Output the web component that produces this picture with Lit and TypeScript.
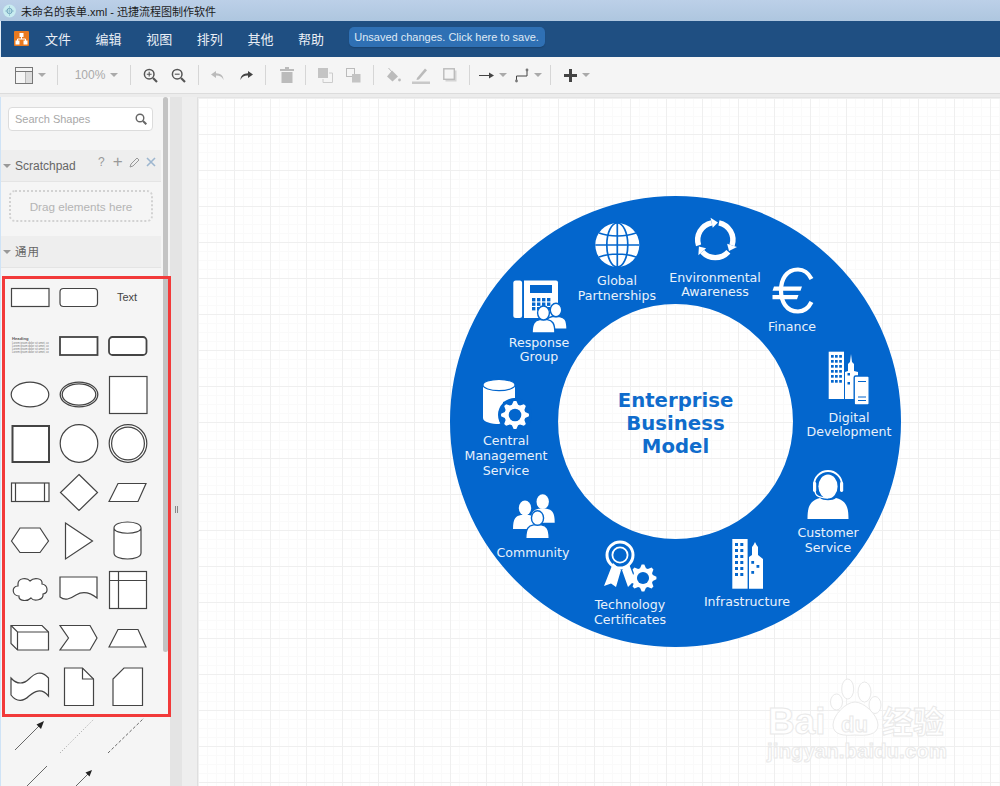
import { LitElement, html, css, svg } from "lit";
import { customElement } from "lit/decorators.js";

const W = "#fff";
const B = "#0366cd";

function gear(cx: number, cy: number, r: number, teeth = 8) {
  let d = "";
  const n = teeth * 4;
  for (let i = 0; i < n; i++) {
    const a = ((i - 0.5) / n) * Math.PI * 2;
    const rr = i % 4 === 0 || i % 4 === 1 ? r : r * 0.76;
    d += `${i ? "L" : "M"}${(cx + rr * Math.cos(a)).toFixed(2)} ${(cy + rr * Math.sin(a)).toFixed(2)}`;
  }
  return svg`<path d="${d}Z" fill="${W}"/><circle cx="${cx}" cy="${cy}" r="${r * 0.45}" fill="${B}"/>`;
}

function person(cx: number, cy: number, s: number, outline = false) {
  const body = `M${cx - 12 * s} ${cy + 21 * s}C${cx - 12 * s} ${cy + 10 * s} ${cx - 9 * s} ${cy + 8 * s} ${cx - 4 * s} ${cy + 7 * s}H${cx + 4 * s}C${cx + 9 * s} ${cy + 8 * s} ${cx + 12 * s} ${cy + 10 * s} ${cx + 12 * s} ${cy + 21 * s}Z`;
  const st = outline ? B : "none";
  return svg`<path d="${body}" fill="${W}" stroke="${st}" stroke-width="1.4"/><ellipse cx="${cx}" cy="${cy}" rx="${6.2 * s}" ry="${7.4 * s}" fill="${W}" stroke="${st}" stroke-width="1.4"/>`;
}

function windows(xs: number[], ys: number[], size = 3) {
  return xs.flatMap((x) => ys.map((y) => svg`<rect x="${x}" y="${y}" width="${size}" height="${size}" fill="${B}"/>`));
}

function recycle(cx: number, cy: number, r: number) {
  const out = [];
  for (const start of [-78, 42, 162]) {
    const a0 = (start * Math.PI) / 180;
    const a1 = ((start + 96) * Math.PI) / 180;
    const p = (a: number, q: number) => `${(cx + q * Math.cos(a)).toFixed(2)} ${(cy + q * Math.sin(a)).toFixed(2)}`;
    const tip = a1 + 0.36;
    out.push(svg`<path d="M${p(a0, r)}A${r} ${r} 0 0 1 ${p(a1, r)}" fill="none" stroke="${W}" stroke-width="5.4"/>
      <path d="M${p(a1, r + 5.2)}L${p(tip, r)}L${p(a1, r - 5.2)}Z" fill="${W}"/>`);
  }
  return out;
}

const labels: [string, number, number][] = [
  ["Global", 617, 285], ["Partnerships", 617, 299.5],
  ["Environmental", 715, 281.5], ["Awareness", 715, 296],
  ["Finance", 792, 331],
  ["Digital", 849, 421.5], ["Development", 849, 436],
  ["Customer", 828, 537], ["Service", 828, 551.5],
  ["Infrastructure", 747, 606],
  ["Technology", 630, 609], ["Certificates", 630, 623.5],
  ["Community", 533, 556.5],
  ["Central", 506, 445], ["Management", 506, 460], ["Service", 506, 474.5],
  ["Response", 539, 346.5], ["Group", 539, 361],
];

const S = "#444";

@customElement("app-root")
export class AppRoot extends LitElement {
  static styles = css`
    :host { display: block; position: relative; width: 1000px; height: 786px; overflow: hidden; font-family: "Liberation Sans", "Noto Sans CJK SC", sans-serif; }
    .app { display: flex; flex-direction: column; height: 786px; background: #ececec; }
    .title { height: 21px; flex: none; display: flex; align-items: center; gap: 5px; padding-left: 3px; box-sizing: border-box; background: linear-gradient(#bcd0e8, #aec6df); font-size: 11px; color: #1b1b1b; font-family: "Liberation Sans", "Noto Sans CJK SC", sans-serif; }
    .menubar { height: 36px; flex: none; display: flex; align-items: center; background: #1f4f82; color: #e9eef5; box-sizing: border-box; padding-left: 13px; border-left: 1px solid #e4eef8; }
    .logo { display: block; margin-right: 16px; margin-top: -2px; }
    .mi { width: 50.6px; font-size: 13px; margin-top: -2px; font-family: "Noto Sans CJK SC", sans-serif; }
    .save { margin-left: 0; margin-top: -5px; height: 20px; width: 196px; box-sizing: border-box; display: flex; align-items: center; justify-content: center; background: #2f70b4; border-radius: 5px; color: #dfe9f4; font-size: 11px; box-shadow: 0 1px 1px #1a436f; }
    .toolbar { height: 37px; flex: none; display: flex; align-items: center; background: #f5f5f5; border-bottom: 1px solid #dcdcdc; box-sizing: border-box; }
    .g { height: 20px; display: flex; align-items: center; justify-content: center; box-sizing: border-box; border-right: 1px solid #d6d6d6; flex: none; }
    .g1 { width: 58px; justify-content: flex-start; padding-left: 15px; } .g2 { width: 73px; padding-left: 5px; } .g3 { width: 68px; } .g4 { width: 67px; }
    .g5 { width: 40px; padding-left: 3px; } .g6 { width: 68px; } .g7 { width: 96px; } .g8 { width: 81px; }
    .g9 { width: 70px; border-right: none; justify-content: flex-start; padding-left: 13px; }
    .it { width: 28.4px; height: 20px; display: flex; align-items: center; justify-content: center; }
    .caret { width: 0; height: 0; border-left: 4px solid transparent; border-right: 4px solid transparent; border-top: 4px solid #aaa; margin-left: 5px; }
    .wp { margin-left: 8px; }
    .pct { font-size: 12px; color: #aaa; }
    .main { flex: 1; display: flex; min-height: 0; padding-top: 3px; }
    .side { width: 170px; flex: none; display: flex; background: #f5f5f5; border-left: 1px solid #cfe3f6; box-sizing: border-box; }
    .panel { width: 160px; flex: none; overflow: hidden; margin-right: 2px; }
    .track { width: 5px; flex: none; }
    .thumb { height: 555px; background: #c3c3c3; border-radius: 3px; }
    .searchwrap { padding: 10px 7px 0 7px; height: 34px; }
    .search { height: 24px; width: 145px; box-sizing: border-box; background: #fff; border: 1px solid #dcdcdc; border-radius: 4px; display: flex; align-items: center; justify-content: space-between; padding: 0 5px 0 6px; font-size: 11px; color: #a8a8a8; }
    .sec { height: 32px; background: #eee; border-bottom: 1px solid #e4e4e4; box-sizing: border-box; display: flex; align-items: center; padding-left: 2px; font-size: 12px; color: #666; margin-top: 9px; }
    .sec.second { margin-top: 14px; }
    .tri { width: 0; height: 0; border-left: 4px solid transparent; border-right: 4px solid transparent; border-top: 4px solid #999; margin-right: 4px; }
    .cjk { font-family: "Noto Sans CJK SC", sans-serif; font-size: 11.5px; letter-spacing: 1px; margin-top: -2px; }
    .tools { margin-left: auto; display: flex; align-items: center; margin-top: -7px; color: #999; font-size: 12px; padding-right: 2px; }
    .q { width: 16.5px; text-align: center; display: flex; justify-content: center; align-items: center; }
    .plus { font-size: 17px; line-height: 12px; }
    .dropwrap { padding: 8px 7px 0 8px; }
    .drop { height: 32px; width: 144px; box-sizing: border-box; border: 2.5px dotted #d2d2d2; border-radius: 6px; display: flex; align-items: center; justify-content: center; color: #b4b4b4; font-size: 11.7px; }
    .shapes { display: block; margin-left: -1px; margin-top: 2px; }
    .split { width: 12px; flex: none; background: #e4e4e4; display: flex; align-items: center; justify-content: center; gap: 1px; box-sizing: border-box; padding-left: 1px; }
    .split i { display: block; width: 1px; height: 7px; background: #888; margin-top: 136px; }
    .gut { width: 15px; flex: none; background: #eee; }
    .canvas { flex: 1; position: relative; min-width: 0; background-color: #fff; border-left: 1px solid #dfdfdf; border-top: 1px solid #e4e4e4; box-sizing: border-box;
      background-image: linear-gradient(#efefef 1px, transparent 1px), linear-gradient(90deg, #efefef 1px, transparent 1px), linear-gradient(#fafafa 1px, transparent 1px), linear-gradient(90deg, #fafafa 1px, transparent 1px);
      background-size: 36px 36px, 36px 36px, 9px 9px, 9px 9px; }
    .diagram { position: absolute; left: -1px; top: -1px; display: block; }
    .lbl { font-family: "DejaVu Sans", sans-serif; font-size: 12.6px; fill: #e8f1fb; text-anchor: middle; }
    .ttl { font-family: "DejaVu Sans", sans-serif; font-size: 19.7px; font-weight: 700; fill: #0f6ccc; text-anchor: middle; }
    .wm { font-family: "Liberation Sans", sans-serif; font-weight: 700; fill: #fff; stroke: #e9e9e9; stroke-width: 1; }
    .wmc { font-family: "Noto Sans CJK SC", sans-serif; font-weight: 700; fill: #fff; stroke: #e9e9e9; stroke-width: 1; }
    .red { position: absolute; left: 2px; top: 276px; width: 169px; height: 441px; box-sizing: border-box; border: 3px solid #f23a3a; pointer-events: none; }
    .tt { font-family: "Liberation Sans", sans-serif; font-size: 11px; fill: #444; text-anchor: middle; }
    .hd { font-family: "Liberation Sans", sans-serif; font-size: 4.2px; font-weight: 700; fill: #555; }
    .sm { font-family: "Liberation Sans", sans-serif; font-size: 2.7px; fill: #777; }
  `;

  private diagram() {
    return html`<svg class="diagram" width="803" height="689" viewBox="197 97 803 689">
      <circle cx="675.5" cy="421.5" r="171.5" fill="none" stroke="${B}" stroke-width="108"/>
      <text class="ttl" x="675.5" y="406.5">Enterprise</text>
      <text class="ttl" x="675.5" y="430">Business</text>
      <text class="ttl" x="675.5" y="453">Model</text>
      ${labels.map(([t, x, y]) => svg`<text class="lbl" x="${x}" y="${y}">${t}</text>`)}

      <!-- globe -->
      <circle cx="617.3" cy="245" r="22" fill="${W}"/>
      <g fill="none" stroke="${B}" stroke-width="1.7">
        <ellipse cx="617.3" cy="245" rx="10.5" ry="22"/>
        <path d="M617.3 223V267M595.3 245H639.3M599 233C610 237 625 237 636 233M599 257C610 253 625 253 636 257"/>
      </g>

      <!-- phone + people -->
      <rect x="513.3" y="280.5" width="8.8" height="37.5" rx="2.5" fill="${W}"/>
      <path d="M524 280.5H556a2 2 0 0 1 2 2V318H524Z" fill="${W}"/>
      <rect x="530" y="285" width="22" height="8" fill="${B}"/>
      ${windows([532, 537, 542, 547], [298, 302.5, 307], 3.4)}
      ${person(556, 310, 0.92, true)}
      ${person(543.5, 313, 0.95, true)}

      <!-- recycle -->
      ${recycle(715.3, 240, 17.6)}

      <!-- euro -->
      <path d="M811.5 279C808 272 803 269.5 798 269.5C786 269.5 781 280 781 290.5C781 301 786 311.5 798 311.5C803 311.5 808 309 811.5 302" fill="none" stroke="${W}" stroke-width="4.2"/>
      <path d="M774 286.5H802L800.5 290.7H772.5ZM772.5 295H798.5L797 299.2H772.5Z" fill="${W}"/>

      <!-- digital -->
      <rect x="828.7" y="351.7" width="15.3" height="47.3" fill="${W}"/>
      ${windows([831, 835, 839.2], [355, 360, 365, 370, 375, 380], 2.7)}
      <path d="M845 399V372L848 371V364L850 362L851 354L852 362L854 364V371L858 372V399Z" fill="${W}"/>
      <rect x="847.5" y="373" width="2.5" height="2.5" fill="${B}"/>
      <rect x="847.5" y="382" width="2.5" height="2.5" fill="${B}"/>
      <rect x="854.2" y="376" width="15" height="29" rx="1.5" fill="${W}" stroke="${B}" stroke-width="1.4"/>
      <path d="M858 381.5H866M858 397H866M858 400.5H866" stroke="${B}" stroke-width="1.2"/>

      <!-- customer service -->
      <path d="M814 491V485A14 14 0 0 1 842 485V491" fill="none" stroke="${W}" stroke-width="1.9"/>
      <ellipse cx="828" cy="486.5" rx="9.6" ry="12" fill="${W}"/>
      <rect x="813" y="482" width="3.2" height="10" rx="1.4" fill="${W}"/>
      <rect x="840" y="482" width="3.2" height="10" rx="1.4" fill="${W}"/>
      <path d="M815 491C815 496 820 498 828 498" fill="none" stroke="${W}" stroke-width="1.2"/>
      <path d="M807.5 519C807.5 506 810 501 820 498C823 501 833 501 836 498C846 501 848.5 506 848.5 519Z" fill="${W}"/>

      <!-- infrastructure -->
      <rect x="732.3" y="539" width="15.3" height="49.7" fill="${W}"/>
      ${windows([735, 740.3], [543, 549, 555, 561, 567, 573], 3)}
      <path d="M749 588.7V557L752 555V547L753.5 545L755 542L756.5 545L758 547V555L763 559V588.7Z" fill="${W}"/>
      <rect x="751.3" y="561" width="2.8" height="2.8" fill="${B}"/>
      <rect x="756.5" y="565" width="2.8" height="2.8" fill="${B}"/>
      <rect x="751.3" y="571" width="2.8" height="2.8" fill="${B}"/>

      <!-- community -->
      ${person(542.7, 501.7, 1, false)}
      ${person(525, 508, 1, false)}
      ${person(537.5, 518, 0.98, true)}

      <!-- certificate -->
      <path d="M613 563L604 586L611 583.5L616 587L621 570ZM622 570L628 587L632 583L637 585L629 564Z" fill="${W}"/>
      <circle cx="620" cy="555" r="13" fill="none" stroke="${W}" stroke-width="3"/>
      <circle cx="620" cy="555" r="7.6" fill="none" stroke="${W}" stroke-width="1.8"/>
      ${gear(643, 578, 13.5)}

      <!-- central -->
      <path d="M483 386V418C483 422 492 424 499 424L503 422V402L515 398V386Z" fill="${W}"/>
      <ellipse cx="499" cy="385" rx="16" ry="5.6" fill="${W}" stroke="${B}" stroke-width="1.2"/>
      <circle cx="515" cy="415" r="17" fill="${B}"/>
      ${gear(515, 415, 14)}

      <!-- watermark -->
      <g>
        <text class="wm" x="768" y="734" font-size="37">Bai</text>
        <ellipse cx="847.7" cy="689" rx="6" ry="10" class="wm"/>
        <ellipse cx="864.5" cy="692" rx="6.5" ry="10" class="wm"/>
        <ellipse cx="836.5" cy="702" rx="6" ry="8" class="wm"/>
        <ellipse cx="875" cy="705" rx="6" ry="8.5" class="wm"/>
        <path class="wm" d="M833 725C833 715 846 702 855 702C864 702 878 715 878 725C878 735 866 736 855 735C844 736 833 735 833 725Z"/>
        <text class="wm" x="841" y="732" font-size="22" font-weight="400">du</text>
        <text class="wmc" x="882" y="733" font-size="31">经验</text>
        <text class="wm" x="767" y="758" font-size="20.5">jingyan.baidu.com</text>
      </g>
    </svg>`;
  }

  private shapes() {
    return html`<svg class="shapes" width="161" height="516" viewBox="0 270 161 516">
      <g fill="#fff" stroke="${S}" stroke-width="1.2">
        <rect x="11.5" y="288.5" width="37.5" height="18"/>
        <rect x="60" y="288.5" width="37.5" height="18" rx="3.5"/>
        <rect x="60" y="337" width="37.5" height="18" stroke-width="1.8"/>
        <rect x="109" y="337" width="37.5" height="18" rx="3.5" stroke-width="1.8"/>
        <ellipse cx="30" cy="394.5" rx="18.8" ry="12.4"/>
        <ellipse cx="79" cy="394.5" rx="18.8" ry="12.4" stroke-width="1.3"/>
        <ellipse cx="79" cy="394.5" rx="16.8" ry="10.6" stroke-width="1.3"/>
        <rect x="109.5" y="376.5" width="37.5" height="37"/>
        <rect x="12.5" y="426" width="36.5" height="36" stroke-width="2"/>
        <circle cx="79" cy="443.5" r="18.8"/>
        <circle cx="128" cy="443.5" r="18.8"/>
        <circle cx="128" cy="443.5" r="16.4"/>
        <rect x="11.5" y="483" width="37.5" height="18.5"/>
        <path d="M15.5 483V501.5M44.5 483V501.5" fill="none"/>
        <path d="M79 474.5L97.5 492.5L79 510.5L60.5 492.5Z"/>
        <path d="M109 501.5L118 483.5H146L138 501.5Z"/>
        <path d="M11.5 541L20 528H40L48.5 541L40 552.5H20Z"/>
        <path d="M65.5 523L92.5 541L65.5 559Z"/>
        <path d="M114 528V553C114 561 141 561 141 553V528C141 520 114 520 114 528C114 535 141 535 141 528"/>
        <path d="M18 584C18 578 27 577 30 581C34 577 43 578 42 584C48 585 49 593 43 594C44 600 34 602 31 598C27 602 18 601 19 596C12 596 11 586 18 586Z"/>
        <path d="M60 577H97V598C88 591 81 592 76 595C70 599 65 601 60 597Z"/>
        <rect x="109.5" y="571.5" width="37" height="37"/>
        <path d="M109.5 580.5H146.5M118.5 571.5V608.5" fill="none"/>
        <path d="M11 625.5H42L48.5 632V650H17.5L11 643.5Z"/>
        <path d="M11 625.5L17.5 632H48.5M17.5 632V650" fill="none"/>
        <path d="M60 625.5H90L97 638L90 650H60L68.5 638Z"/>
        <path d="M109 647L118 629.5H138L146 647Z"/>
        <path d="M11 678C17 685 24 684 29 679C34 674 41 669 48.5 678V696C41 687 34 692 29 696C24 701 17 703 11 695Z"/>
        <path d="M64.5 668H82.5L93.5 679V705.5H64.5Z"/>
        <path d="M82.5 668V679H93.5" fill="none"/>
        <path d="M124 668H142.5V705.5H113V679Z"/>
      </g>
      <text class="tt" x="127" y="300.5">Text</text>
      <text class="hd" x="12" y="340">Heading</text>
      ${[344, 347, 350, 353].map((y) => svg`<text class="sm" x="12" y="${y}">Lorem ipsum dolor sit amet, co</text>`)}
      <g fill="none" stroke="${S}" stroke-width="0.8">
        <path d="M15 750L41 724"/>
        <path d="M60 753L94 719" stroke-dasharray="1 2" stroke="#888"/>
        <path d="M108 753L144 718" stroke-dasharray="3 2"/>
        <path d="M27 786L47 766"/>
        <path d="M76 786L89 773"/>
      </g>
      <path d="M44 721L41 729L36.5 724.5Z" fill="#222"/>
      <path d="M92 770L89.5 776.5L85.5 772.5Z" fill="#222"/>
    </svg>`;
  }

  render() {
    return html`<div class="app">
      <div class="title">
        <svg width="13" height="14" viewBox="0 0 13 14"><circle cx="6.5" cy="7" r="6.4" fill="#c8ecf0"/><circle cx="6.5" cy="7" r="2.6" fill="none" stroke="#6a9fb8" stroke-width="1"/><path d="M6.5 2V12M2 7H11" stroke="#7fb3c6" stroke-width=".6"/></svg>
        <span>未命名的表单.xml - 迅捷流程图制作软件</span>
      </div>
      <div class="menubar">
        <svg class="logo" width="15" height="15" viewBox="0 0 15 15"><rect width="15" height="15" rx="1" fill="#e9791f"/><path d="M7.5 5V8M3.5 10V8H11.5V10" fill="none" stroke="#fff" stroke-width="1"/><rect x="5.5" y="2" width="4" height="4" fill="#fff"/><rect x="1.5" y="9.5" width="4" height="4" fill="#fff"/><rect x="9.5" y="9.5" width="4" height="4" fill="#fff"/></svg>
        ${["文件", "编辑", "视图", "排列", "其他", "帮助"].map((m) => html`<span class="mi">${m}</span>`)}
        <div class="save">Unsaved changes. Click here to save.</div>
      </div>
      <div class="toolbar">
        <div class="g g1">
          <svg width="18" height="17" viewBox="0 0 18 17"><rect x=".5" y=".5" width="17" height="16" fill="none" stroke="#777"/><path d="M.5 4.5H17.5M11 4.5V16.5" stroke="#777" fill="none"/><rect x="11" y="5" width="6" height="11" fill="#ddd"/></svg>
          <span class="caret"></span>
        </div>
        <div class="g g2"><span class="pct">100%</span><span class="caret"></span></div>
        <div class="g g3">
          <span class="it"><svg width="15" height="15" viewBox="0 0 15 15" fill="none" stroke="#555" stroke-width="1.5"><circle cx="6.2" cy="6.2" r="4.8"/><path d="M10 10L14 14" stroke-width="2.2"/><path d="M3.8 6.2H8.6M6.2 3.8V8.6" stroke-width="1.1"/></svg></span>
          <span class="it"><svg width="15" height="15" viewBox="0 0 15 15" fill="none" stroke="#555" stroke-width="1.5"><circle cx="6.2" cy="6.2" r="4.8"/><path d="M10 10L14 14" stroke-width="2.2"/><path d="M3.8 6.2H8.6" stroke-width="1.1"/></svg></span>
        </div>
        <div class="g g4">
          <span class="it"><svg width="15" height="11" viewBox="0 0 15 11"><path d="M6 1L1 4.5L6 8V5.6C9 5.4 12 6.5 13.5 10C13.5 5.5 10.5 3.4 6 3.2Z" fill="#bbb"/></svg></span>
          <span class="it"><svg width="15" height="11" viewBox="0 0 15 11"><path d="M9 1L14 4.5L9 8V5.6C6 5.4 3 6.5 1.5 10C1.5 5.5 4.5 3.4 9 3.2Z" fill="#444"/></svg></span>
        </div>
        <div class="g g5"><svg width="14" height="16" viewBox="0 0 14 16"><path d="M0 2H14V4H0ZM5 0H9V2H5ZM1.5 5H12.5V16H1.5Z" fill="#bbb"/></svg></div>
        <div class="g g6">
          <span class="it"><svg width="15" height="15" viewBox="0 0 15 15"><rect x=".5" y=".5" width="9" height="9" fill="#c4c4c4" stroke="#c4c4c4"/><path d="M11 5H14.5V14.5H5V11" fill="none" stroke="#ccc"/></svg></span>
          <span class="it"><svg width="15" height="15" viewBox="0 0 15 15"><rect x=".5" y=".5" width="8" height="8" fill="none" stroke="#bbb"/><rect x="6" y="6" width="8.5" height="8.5" fill="#c4c4c4"/></svg></span>
        </div>
        <div class="g g7">
          <span class="it"><svg width="16" height="16" viewBox="0 0 16 16"><path d="M7 3.5L13 9.5L7.5 14.5L2 9.5Z" fill="#bbb"/><path d="M3.5 1L7 5" stroke="#bbb" fill="none"/><circle cx="14.5" cy="13" r="1.4" fill="#bbb"/></svg></span>
          <span class="it"><svg width="18" height="17" viewBox="0 0 18 17"><path d="M5 11L13 1.5L15 3.2L7 12.5L4.5 13Z" fill="#bbb"/><rect y="14.5" width="18" height="2.5" fill="#c8c8c8"/></svg></span>
          <span class="it"><svg width="14" height="14" viewBox="0 0 14 14"><rect x="2.5" y="2.5" width="11" height="11" fill="#d4d4d4"/><rect x=".8" y=".8" width="10.5" height="10.5" fill="#f5f5f5" stroke="#bbb" stroke-width="1.4"/></svg></span>
        </div>
        <div class="g g8">
          <svg width="15" height="9" viewBox="0 0 15 9"><path d="M0 4.5H11" stroke="#444"/><path d="M10 1.5L15 4.5L10 7.5Z" fill="#444"/></svg>
          <span class="caret"></span>
          <svg class="wp" width="14" height="15" viewBox="0 0 14 15"><path d="M1.5 13V8H12V2" fill="none" stroke="#444"/><circle cx="12" cy="2" r="1.4" fill="#777"/><circle cx="1.5" cy="13" r="1.4" fill="#777"/></svg>
          <span class="caret"></span>
        </div>
        <div class="g g9">
          <svg width="13" height="13" viewBox="0 0 13 13"><path d="M5 0H8V5H13V8H8V13H5V8H0V5H5Z" fill="#444"/></svg>
          <span class="caret"></span>
        </div>
      </div>
      <div class="main">
        <div class="side">
          <div class="panel">
            <div class="searchwrap"><div class="search">Search Shapes
              <svg width="12" height="12" viewBox="0 0 12 12" fill="none" stroke="#666" stroke-width="1.4"><circle cx="5" cy="5" r="3.8"/><path d="M8 8L11.3 11.3" stroke-width="2"/></svg></div></div>
            <div class="sec"><span class="tri"></span>Scratchpad
              <span class="tools"><span class="q">?</span><span class="q plus">+</span>
                <span class="q"><svg width="11" height="11" viewBox="0 0 11 11"><path d="M1 10L2 7L8 1L10 3L4 9Z" fill="none" stroke="#999"/></svg></span>
                <span class="q"><svg width="10" height="10" viewBox="0 0 10 10"><path d="M1 1L9 9M9 1L1 9" stroke="#9db6cf" stroke-width="1.6"/></svg></span></span>
            </div>
            <div class="dropwrap"><div class="drop">Drag elements here</div></div>
            <div class="sec second"><span class="tri"></span><span class="cjk">通用</span></div>
            ${this.shapes()}
          </div>
          <div class="track"><div class="thumb"></div></div>
        </div>
        <div class="split"><i></i><i></i></div>
        <div class="gut"></div>
        <div class="canvas">${this.diagram()}</div>
      </div>
      <div class="red"></div>
    </div>`;
  }
}
